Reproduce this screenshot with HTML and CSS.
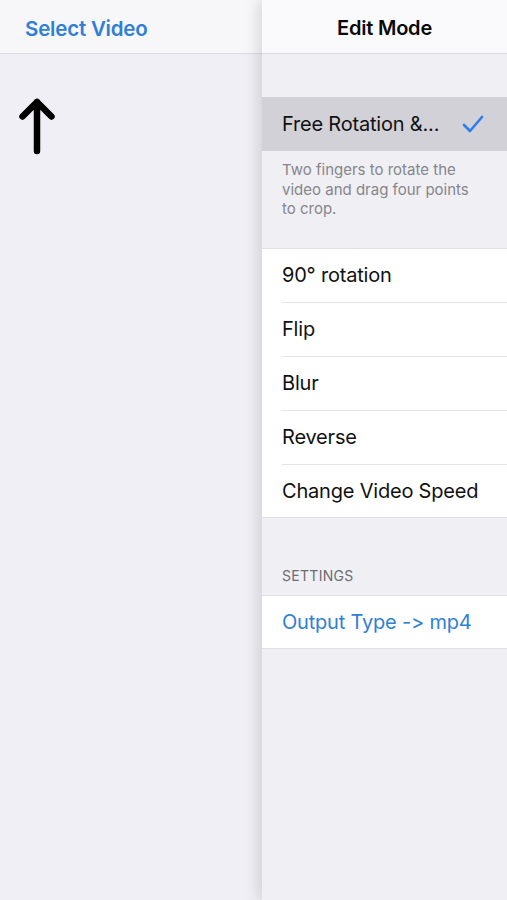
FILE: index.html
```html
<!DOCTYPE html>
<html>
<head>
<meta charset="utf-8">
<link rel="stylesheet" href="styles.css">
</head>
<body>
<div class="app">
  <div class="master">
    <div class="nav nav-left"><span class="nav-link">Select Video</span></div>
    <div class="master-body">
      <svg class="arrow" width="38" height="60" viewBox="0 0 38 60">
        <path d="M19 55 V6 M4.5 20.5 L19 6 L33.5 20.5" fill="none" stroke="#000" stroke-width="6.5" stroke-linecap="round" stroke-linejoin="round"/>
      </svg>
    </div>
  </div>
  <div class="detail">
    <div class="nav nav-right"><span class="nav-title">Edit Mode</span></div>
    <div class="top-space"></div>
    <div class="row selected">
      <span class="label">Free Rotation &amp;...</span>
      <svg class="check" width="22" height="18" viewBox="0 0 22 18">
        <path d="M2 10 L8 16 L20 2" fill="none" stroke="#2f7cf0" stroke-width="2.6" stroke-linecap="round" stroke-linejoin="round"/>
      </svg>
    </div>
    <p class="footer-note">Two fingers to rotate the video and drag four points to crop.</p>
    <div class="group">
      <div class="row"><span class="label">90° rotation</span></div>
      <div class="row"><span class="label">Flip</span></div>
      <div class="row"><span class="label">Blur</span></div>
      <div class="row"><span class="label">Reverse</span></div>
      <div class="row"><span class="label">Change Video Speed</span></div>
    </div>
    <div class="section-header">SETTINGS</div>
    <div class="group">
      <div class="row short"><span class="label blue">Output Type -&gt; mp4</span></div>
    </div>
  </div>
</div>
</body>
</html>
```
FILE: styles.css
```css
html, body {
  margin: 0;
  padding: 0;
}
body {
  font-family: Inter, "Noto Sans", "Liberation Sans", sans-serif;
  background: #efeff4;
  width: 507px;
  height: 900px;
  overflow: hidden;
}
.app {
  display: flex;
  height: 900px;
}
.master {
  width: 262px;
  flex: none;
  background: #f0eff5;
  display: flex;
  flex-direction: column;
}
.nav {
  height: 54px;
  box-sizing: border-box;
  border-bottom: 1px solid #dcdbdf;
  display: flex;
  align-items: center;
  padding-top: 3px;
}
.nav-left {
  background: #f7f6f8;
  padding-left: 25px;
}
.nav-link {
  color: #2f7fd6;
  font-size: 20.5px;
  font-weight: 600;
  letter-spacing: -0.2px;
}
.master-body {
  flex: 1;
  padding: 42px 0 0 18px;
}
.arrow {
  display: block;
}
.detail {
  flex: 1;
  background: #efeff4;
  box-shadow: -4px 0 14px rgba(0, 0, 0, 0.13);
  position: relative;
  z-index: 1;
  display: flex;
  flex-direction: column;
}
.nav-right {
  background: #fafafc;
  justify-content: center;
}
.nav-title {
  color: #0a0a0a;
  font-size: 20px;
  font-weight: 600;
  letter-spacing: -0.2px;
}
.top-space {
  height: 43px;
}
.row {
  height: 53.8px;
  box-sizing: border-box;
  display: flex;
  align-items: center;
  justify-content: space-between;
  padding: 0 23px 0 20px;
  background: #fff;
  position: relative;
}
.row.selected {
  background: #d2d1d7;
  height: 54px;
}
.row.short {
  height: 52px;
}
.label {
  font-size: 20px;
  color: #111;
  letter-spacing: -0.2px;
}
.label.blue {
  color: #2f7fd6;
}
.footer-note {
  margin: 0;
  padding: 9px 28px 29px 20px;
  font-size: 15px;
  line-height: 19.5px;
  color: #86868b;
}
.group {
  border-top: 1px solid #e0e0e4;
  border-bottom: 1px solid #e0e0e4;
  background: #fff;
}
.group .row + .row::before {
  content: "";
  position: absolute;
  top: 0;
  left: 20px;
  right: 0;
  border-top: 1px solid #e4e4e8;
}
.section-header {
  padding: 49px 20px 11px;
  font-size: 14px;
  color: #6d6d72;
  letter-spacing: 0.3px;
}
```
